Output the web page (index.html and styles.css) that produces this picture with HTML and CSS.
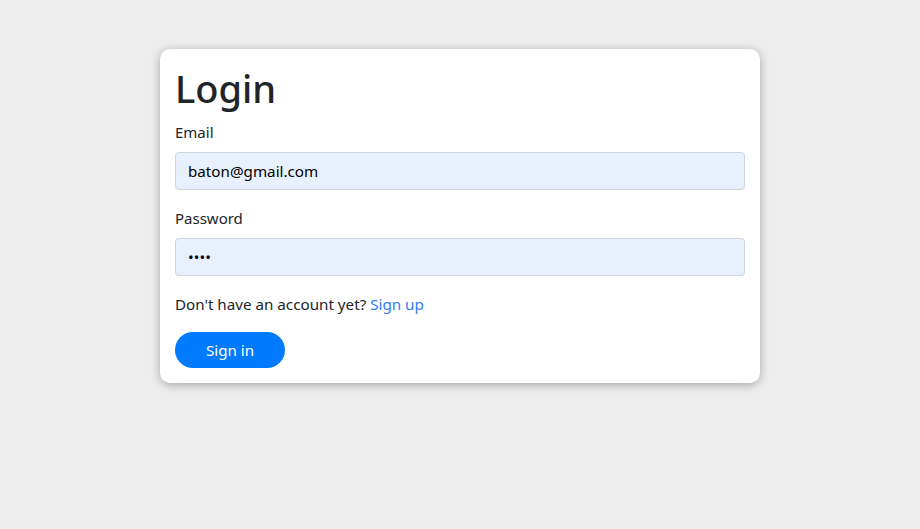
FILE: index.html
```html
<!DOCTYPE html>
<html lang="en">
<head>
<meta charset="utf-8">
<title>Login</title>
<link rel="stylesheet" href="styles.css">
</head>
<body>
<main class="page">
  <form class="card">
    <h1 class="title">Login</h1>
    <label class="label" for="email">Email</label>
    <input class="field" id="email" type="email" value="baton@gmail.com">
    <label class="label" for="password">Password</label>
    <input class="field" id="password" type="password" value="1234">
    <p class="note">Don't have an account yet? <a class="link" href="#">Sign up</a></p>
    <button class="btn" type="button">Sign in</button>
  </form>
</main>
</body>
</html>
```

FILE: styles.css
```css
* { box-sizing: border-box; }
html, body { margin: 0; }
body {
  background: #ededed;
  font-family: "Noto Sans", "Open Sans", "Liberation Sans", sans-serif;
  font-size: 15.2px;
  line-height: 24px;
  color: #212529;
  min-height: 529px;
}
.page {
  display: flex;
  justify-content: center;
  padding-top: 49px;
}
.card {
  width: 600px;
  background: #fff;
  border-radius: 10px;
  box-shadow: 0 2px 10px rgba(0, 0, 0, 0.3);
  padding: 15px;
  display: flex;
  flex-direction: column;
  align-items: flex-start;
}
.title {
  margin: 0 0 8px;
  font-size: 38px;
  line-height: 48px;
  font-weight: 500;
  color: #212529;
}
.label {
  display: block;
  margin-bottom: 8px;
  font-size: 15px;
}
.field {
  width: 100%;
  height: 38px;
  margin: 0 0 16px;
  padding: 0 12px;
  border: 1px solid #ced4da;
  border-radius: 4px;
  background: #e8f0fe;
  font-family: inherit;
  font-size: 15.2px;
  color: #000;
  outline: none;
}
.note {
  margin: 0 0 16px;
  font-size: 15.2px;
}
.link {
  color: #2f7cf6;
  text-decoration: none;
}
.btn {
  width: 110px;
  height: 36px;
  border: none;
  border-radius: 18px;
  background: #007bff;
  color: #fff;
  font-family: inherit;
  font-size: 15.2px;
  cursor: pointer;
}
```
